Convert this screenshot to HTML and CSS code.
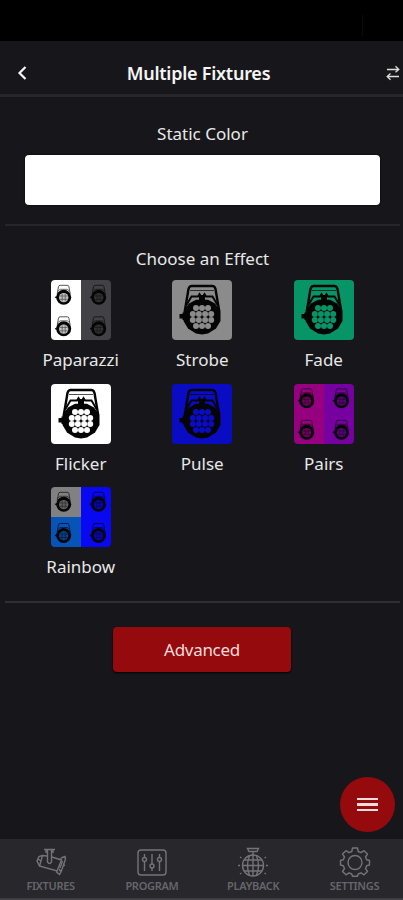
FILE: index.html
```
<!DOCTYPE html>
<html lang="en">
<head>
<meta charset="utf-8">
<title>Multiple Fixtures</title>
<link rel="stylesheet" href="styles.css">
</head>
<body>
<svg class="defs" aria-hidden="true">
  <symbol id="par" viewBox="0 0 60 60">
    <path d="M12.800 31 L16 12 Q16.500 6 19.500 6 H40.500 Q43.500 6 44 12 L47.200 31" fill="none" stroke="#050505" stroke-width="2.400"/>
    <path d="M18 10.500 H42" fill="none" stroke="#050505" stroke-width=".7"/>
    <path d="M14.500 25 L19.500 16.500 H26 L27.500 14 L29 16.500 H31 L32.500 14 L34 16.500 H40.500 L45.500 25" fill="none" stroke="#050505" stroke-width="1.900"/>
    <path d="M27 15 H33 V21 H27 Z" fill="#050505"/>
    <path d="M7.500 34 H10.500 V32.500 H13 V40 H10.500 V38.500 H7.500 Z" fill="#050505"/>
    <path d="M24 19.800 H36 L43 23.500 L48.500 31 V41 L44 48.500 L36 53.500 L30 54.500 L24 53.500 L16 48.500 L11.500 41 V31 L17 23.500 Z" fill="#050505"/>
    <g fill="currentColor">
      <circle cx="24" cy="28" r="3"/><circle cx="30" cy="28" r="3"/><circle cx="36" cy="28" r="3"/>
      <circle cx="20.800" cy="34" r="3"/><circle cx="26.900" cy="34" r="3"/><circle cx="33.100" cy="34" r="3"/><circle cx="39.200" cy="34" r="3"/>
      <circle cx="20.800" cy="40" r="3"/><circle cx="26.900" cy="40" r="3"/><circle cx="33.100" cy="40" r="3"/><circle cx="39.200" cy="40" r="3"/>
      <circle cx="24" cy="46" r="3"/><circle cx="30" cy="46" r="3"/><circle cx="36" cy="46" r="3"/>
    </g>
  </symbol>
  <symbol id="par-small" viewBox="0 0 24 24">
    <path d="M5.500 11 L6.800 3.800 Q7 2.500 8.500 2.500 H15.500 Q17 2.500 17.200 3.800 L18.500 11" fill="none" stroke="#050505" stroke-width=".9" opacity=".75"/>
    <path d="M6.500 8 L8.500 6.500 H15.500 L17.500 8" fill="none" stroke="#050505" stroke-width=".8" opacity=".75"/>
    <path d="M3 14.500 L5 13 V16 Z" fill="#050505"/>
    <circle cx="12" cy="14.500" r="7.500" fill="#050505"/>
    <circle cx="12" cy="14.800" r="4.700" fill="currentColor" opacity=".75"/>
    <path d="M8 13.200 H16 M8 16.500 H16 M10.500 11 V18.500 M13.500 11 V18.500" stroke="#050505" stroke-width=".7" opacity=".6"/>
  </symbol>
</svg>

<div class="status"><i></i></div>
<header class="bar">
  <svg class="back" viewBox="0 0 12 18"><path d="M9.500 3 L3.500 9 L9.500 15"/></svg>
  <h1>Multiple Fixtures</h1>
  <svg class="swap" viewBox="0 0 14 16"><path d="M1 4.500 H12.500 M9.500 1.200 L12.800 4.500 L9.500 7.200 M13 11.500 H1.500 M4.500 8.500 L1.200 11.500 L4.500 14.800"/></svg>
</header>

<main>
  <section class="static">
    <h2>Static Color</h2>
    <div class="swatch"></div>
  </section>
  <section class="effects">
    <h2>Choose an Effect</h2>
    <div class="grid">
      <div class="effect">
        <div class="tile split">
          <div class="cell white"><svg viewBox="0 0 30 60"><use href="#par-small" x=".7" y="2.800" width="24" height="24"/><use href="#par-small" x=".7" y="34.300" width="24" height="24"/></svg></div>
          <div class="cell gray-dark"><svg viewBox="0 0 30 60"><use href="#par-small" x="5.700" y="2.800" width="24" height="24"/><use href="#par-small" x="5.700" y="34.300" width="24" height="24"/></svg></div>
        </div>
        <span>Paparazzi</span>
      </div>
      <div class="effect"><div class="tile gray"><svg viewBox="0 0 60 60"><use href="#par"/></svg></div><span>Strobe</span></div>
      <div class="effect"><div class="tile green"><svg viewBox="0 0 60 60"><use href="#par"/></svg></div><span>Fade</span></div>
      <div class="effect"><div class="tile white"><svg viewBox="0 0 60 60"><use href="#par"/></svg></div><span>Flicker</span></div>
      <div class="effect"><div class="tile blue"><svg viewBox="0 0 60 60"><use href="#par"/></svg></div><span>Pulse</span></div>
      <div class="effect">
        <div class="tile split">
          <div class="cell magenta"><svg viewBox="0 0 30 60"><use href="#par-small" x=".7" y="2.300" width="24" height="24"/><use href="#par-small" x=".7" y="33.800" width="24" height="24"/></svg></div>
          <div class="cell purple"><svg viewBox="0 0 30 60"><use href="#par-small" x="5.500" y="2.300" width="24" height="24"/><use href="#par-small" x="5.500" y="33.800" width="24" height="24"/></svg></div>
        </div>
        <span>Pairs</span>
      </div>
      <div class="effect">
        <div class="tile split four">
          <div class="cell gray-mid"><svg viewBox="0 0 30 30"><use href="#par-small" x=".7" y="2.800" width="24" height="24"/></svg></div>
          <div class="cell bright"><svg viewBox="0 0 30 30"><use href="#par-small" x="5.500" y="2.800" width="24" height="24"/></svg></div>
          <div class="cell azure"><svg viewBox="0 0 30 30"><use href="#par-small" x=".7" y="4" width="24" height="24"/></svg></div>
          <div class="cell bright"><svg viewBox="0 0 30 30"><use href="#par-small" x="5.500" y="4" width="24" height="24"/></svg></div>
        </div>
        <span>Rainbow</span>
      </div>
    </div>
  </section>
  <section class="more"><button class="advanced">Advanced</button></section>
</main>

<button class="fab" aria-label="Menu"><i></i><i></i><i></i></button>

<nav>
  <a><svg viewBox="0 0 32 30"><path d="M9 2.500 H20 M12.500 3 V15 Q14.500 18 16.500 15 V3 M11 3 V6 M18 3 V6"/><path d="M12 9 L7.500 8.500 L4.500 19 L22 24 L26.500 13 L17 10"/><path d="M7.500 8.500 L4 9.500 L2 14 L4.500 19 M3 12 L6 14 M26.500 13 L24.500 11.500 M26 11 L30 9.500 L30.500 12 L28.500 18 L26 25 L24.500 27.500 L21.500 25 L22 24 M27.500 14 L25 21 M28.500 18 L30 18.500 M26 25 L24 22"/></svg><span>FIXTURES</span></a>
  <a><svg viewBox="0 0 32 30"><rect x="2" y="3" width="28" height="25" rx="3"/><path d="M8.500 7 V10.500 M8.500 14.500 V24 M16 7 V17 M16 21 V24 M23.500 7 V10.500 M23.500 14.500 V24"/><circle cx="8.500" cy="12.500" r="2"/><circle cx="16" cy="19" r="2"/><circle cx="23.500" cy="12.500" r="2"/></svg><span>PROGRAM</span></a>
  <a><svg viewBox="0 0 32 30"><path d="M10.500 1.500 H21.500 L20 4.500 H12 Z M16 5 V8"/><circle cx="16" cy="18.500" r="10.500"/><path d="M16 8 V29 M5.500 18.500 H26.500 M7.500 13 H24.500 M7.500 24 H24.500 M12.500 8.800 Q8.500 18.500 12.500 28.300 M19.500 8.800 Q23.500 18.500 19.500 28.300"/><path d="M3 10 L4.500 11 M29 10 L27.500 11 M1 18.500 H3 M29 18.500 H31 M3 27 L4.500 26 M29 27 L27.500 26"/></svg><span>PLAYBACK</span></a>
  <a><svg viewBox="0 0 32 30"><path stroke-linejoin="round" d="M13.500 1 H18.500 L19.200 4.500 L22 5.700 L25 3.700 L28.500 7 L26.500 10 L27.700 12.800 L30.500 13.500 V18 L27.700 18.700 L26.500 21.500 L28.500 24.500 L25 27.800 L22 25.800 L19.200 27 L18.500 29.300 H13.500 L12.800 27 L10 25.800 L7 27.800 L3.500 24.500 L5.500 21.500 L4.300 18.700 L1.500 18 V13.500 L4.300 12.800 L5.500 10 L3.500 7 L7 3.700 L10 5.700 L12.800 4.500 Z"/><circle cx="16" cy="15.500" r="7"/></svg><span>SETTINGS</span></a>
</nav>
</body>
</html>
```
FILE: styles.css
```
* { box-sizing: border-box; }
body {
  margin: 0;
  width: 403px;
  height: 900px;
  position: relative;
  display: flex;
  flex-direction: column;
  overflow: hidden;
  background: #17171b;
  color: #e8e8e8;
  font-family: "Noto Sans", "Open Sans", sans-serif;
}
.defs { position: absolute; width: 0; height: 0; }
svg { display: block; }
h1, h2 { margin: 0; }
.status { height: 41px; background: #000; display: flex; justify-content: flex-end; padding: 15px 40px 5px 0; flex: none; }
.status i { width: 1px; background: #0b0b0b; }
.bar {
  height: 56px;
  flex: none;
  display: grid;
  grid-template-columns: 60px 1fr 60px;
  align-items: center;
  padding-top: 10px;
  border-bottom: 3px solid #27272b;
}
.bar h1 { font-size: 18px; line-height: 24px; font-weight: 600; text-align: center; letter-spacing: -.25px; color: #f5f5f5; margin-left: -6px; }
.back { width: 12px; height: 18px; margin-left: 16px; }
.back path { fill: none; stroke: #f5f5f5; stroke-width: 2.2; }
.swap { width: 14px; height: 16px; justify-self: end; margin-right: 3px; }
.swap path { fill: none; stroke: #ddd; stroke-width: 1.3; }
h2 { font-size: 17px; line-height: 24px; font-weight: 400; text-align: center; }
.static { height: 129px; padding: 25px 20px 0; margin: 0 3px 0 5px; border-bottom: 2px solid #27272b; }
.swatch { height: 49.500px; margin-top: 9px; border-radius: 4px; background: #fff; box-shadow: 0 0 2px #000; }
.effects { height: 377px; padding-top: 21px; margin: 0 3px 0 5px; border-bottom: 2px solid #303034; }
.grid { display: grid; grid-template-columns: repeat(3, 121.500px); grid-auto-rows: 103.500px; margin: 9px 0 0 15px; }
.effect { display: flex; flex-direction: column; align-items: center; font-size: 17px; line-height: 24px; }
.effect span { margin-top: 8px; }
.tile { width: 60px; height: 60px; border-radius: 4px; overflow: hidden; flex: none; }
.tile svg { width: 100%; height: 100%; }
.split { display: grid; grid-template-columns: 30px 30px; grid-template-rows: 60px; }
.four { grid-template-rows: 30px 30px; }
.white { background: #fff; color: #fff; }
.gray { background: #8b8b8b; color: #8b8b8b; }
.gray-mid { background: #818181; color: #818181; }
.gray-dark { background: #424246; color: #424246; }
.green { background: #079568; color: #079568; }
.blue { background: #0a0cc4; color: #0a0cc4; }
.magenta { background: #960080; color: #960080; }
.purple { background: #7600a0; color: #7600a0; }
.bright { background: #0808f2; color: #0808f2; }
.azure { background: #0754b8; color: #0754b8; }
.more { display: flex; justify-content: center; padding: 24px 0 0 1px; }
button { border: 0; padding: 0; font-family: inherit; }
.advanced { width: 178px; height: 45px; border-radius: 4px; background: #950a0c; color: #f3dcdc; font-size: 17px; line-height: 24px; letter-spacing: -.3px; box-shadow: 0 1px 2px #000; }
.fab { position: absolute; left: 340px; top: 777px; width: 55px; height: 55px; border-radius: 50%; background: #950a0c; display: flex; flex-direction: column; align-items: center; justify-content: center; gap: 3px; }
.fab i { width: 21px; height: 2.500px; background: #f3dcdc; }
nav { margin-top: auto; height: 61px; flex: none; display: grid; grid-template-columns: repeat(4, 101.300px); background: #27272c; border-bottom: 2px solid #3d3d42; padding-top: 8px; }
nav a { display: flex; flex-direction: column; align-items: center; color: #66666a; font-size: 11px; line-height: 14px; }
nav svg { width: 32px; height: 30px; fill: none; stroke: #747478; stroke-width: 1.4; }
nav span { margin-top: 2px; font-weight: 600; letter-spacing: -.3px; }
```
